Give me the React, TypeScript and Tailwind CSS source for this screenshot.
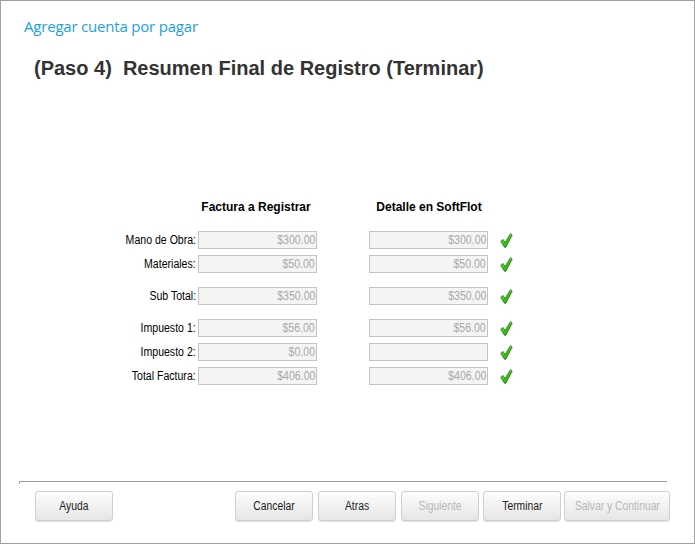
import React from "react";

const narrow = "font-['Liberation_Sans',Arial,sans-serif]";

function Check() {
  return (
    <svg width="13" height="15" viewBox="0 0 13 15" className="block">
      <defs>
        <linearGradient id="cg" x1="0" y1="0" x2="1" y2="1">
          <stop offset="0" stopColor="#8ef05a" />
          <stop offset="0.5" stopColor="#3ec81a" />
          <stop offset="1" stopColor="#1b8f06" />
        </linearGradient>
      </defs>
      <path
        d="M0.8 8.2 L3.2 6.6 L5.2 9.6 L10.4 0.8 L12.2 2 L5.9 14.2 L4.4 14.2 Z"
        fill="url(#cg)"
        stroke="#1a6e08"
        strokeWidth="0.8"
        strokeLinejoin="round"
      />
      <path d="M10.6 1.8 L11.3 2.3" stroke="#c8ffb0" strokeWidth="0.8" />
    </svg>
  );
}

function Field({ value }: { value: string }) {
  return (
    <div className="w-[119px] h-[18px] border border-[#c4c4c4] bg-[#f4f4f4] flex items-center justify-end pr-[1px] overflow-hidden">
      <span className={`${narrow} text-[12px] leading-none text-[#a8a8a8] inline-block scale-x-[0.88] origin-right whitespace-nowrap`}>
        {value}
      </span>
    </div>
  );
}

function Row({ label, a, b, mt }: { label: string; a: string; b: string; mt: string }) {
  return (
    <div className={`flex items-center h-[18px] ${mt}`}>
      <div className="w-[97px] flex justify-end pr-[2px]">
        <span className={`${narrow} text-[12px] leading-none text-black inline-block scale-x-[0.88] origin-right whitespace-nowrap`}>
          {label}
        </span>
      </div>
      <Field value={a} />
      <div className="w-[52px]" />
      <Field value={b} />
      <div className="w-[12px]" />
      <Check />
    </div>
  );
}

function Btn({ label, w, disabled }: { label: string; w: string; disabled?: boolean }) {
  return (
    <div
      className={`${w} h-[30px] rounded-[3px] border border-[#cfcfcf] bg-gradient-to-b from-[#fdfdfd] to-[#e6e6e6] flex items-center justify-center shadow-[0_1px_0_#e0e0e0]`}
    >
      <span
        className={`${narrow} text-[12px] leading-none inline-block scale-x-[0.86] whitespace-nowrap ${
          disabled ? "text-[#b8b8b8]" : "text-[#222]"
        }`}
      >
        {label}
      </span>
    </div>
  );
}

export default function App() {
  return (
    <div className="w-[695px] h-[544px] bg-white border border-[#a0a0a0] flex flex-col">
      <div className="pl-[23px] pt-[15px] h-[35px] leading-[20px] text-[15px] text-[#1ba1e2] font-['Open_Sans','Noto_Sans',sans-serif] tracking-[-0.2px]">
        Agregar cuenta por pagar
      </div>
      <div className="pl-[33px] mt-[20px] h-[24px] leading-[24px] text-[20px] font-bold text-[#333333] font-['Liberation_Sans',Arial,sans-serif] whitespace-pre">
        {"(Paso 4)  Resumen Final de Registro (Terminar)"}
      </div>
      <div className="mt-[119px] h-[16px] flex items-center text-[12px] font-bold text-black font-['Liberation_Sans',Arial,sans-serif] leading-[16px]">
        <div className="w-[200px]" />
        <div className="w-[110px] text-center whitespace-nowrap">Factura a Registrar</div>
        <div className="w-[63px]" />
        <div className="w-[110px] text-center whitespace-nowrap">Detalle en SoftFlot</div>
      </div>
      <div className="mt-[16px] pl-[100px] flex flex-col">
        <Row label="Mano de Obra:" a="$300.00" b="$300.00" mt="" />
        <Row label="Materiales:" a="$50.00" b="$50.00" mt="mt-[6px]" />
        <Row label="Sub Total:" a="$350.00" b="$350.00" mt="mt-[14px]" />
        <Row label="Impuesto 1:" a="$56.00" b="$56.00" mt="mt-[14px]" />
        <Row label="Impuesto 2:" a="$0.00" b="" mt="mt-[6px]" />
        <Row label="Total Factura:" a="$406.00" b="$406.00" mt="mt-[6px]" />
      </div>
      <div className="mt-[96px] ml-[18px] w-[648px] flex">
        <div className="w-[1px] h-[3px] bg-[#a0a0a0]" />
        <div className="flex-1 h-[1px] bg-[#a0a0a0]" />
      </div>
      <div className="mt-[7px] flex items-center">
        <div className="w-[34px]" />
        <Btn label="Ayuda" w="w-[78px]" />
        <div className="w-[122px]" />
        <Btn label="Cancelar" w="w-[78px]" />
        <div className="w-[5px]" />
        <Btn label="Atras" w="w-[78px]" />
        <div className="w-[5px]" />
        <Btn label="Siguiente" w="w-[78px]" disabled />
        <div className="w-[4px]" />
        <Btn label="Terminar" w="w-[78px]" />
        <div className="w-[3px]" />
        <Btn label="Salvar y Continuar" w="w-[106px]" disabled />
      </div>
    </div>
  );
}
